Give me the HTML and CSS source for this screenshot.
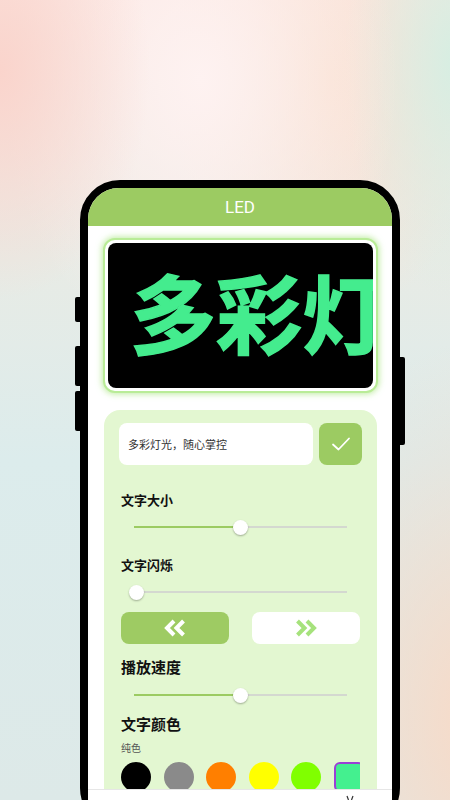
FILE: index.html
```html
<!DOCTYPE html>
<html lang="zh-CN">
<head>
<meta charset="utf-8">
<title>LED</title>
<link rel="stylesheet" href="styles.css">
</head>
<body>
<div class="phone">
  <span class="side side-l1"></span>
  <span class="side side-l2"></span>
  <span class="side side-l3"></span>
  <span class="side side-r1"></span>
  <div class="screen">
    <header class="appbar">LED</header>
    <main class="content">
      <div class="led-frame">
        <div class="led"><span class="led-text">多彩灯光</span></div>
      </div>
      <section class="panel">
        <div class="input-row">
          <div class="input">多彩灯光，随心掌控</div>
          <button class="ok" type="button">
            <svg width="20" height="16" viewBox="0 0 20 16"><path d="M2 8.5 L7.5 13.5 L18 2.5" fill="none" stroke="#fff" stroke-width="1.8" stroke-linecap="round" stroke-linejoin="round"/></svg>
          </button>
        </div>
        <div class="label label-sm l1">文字大小</div>
        <div class="slider s1" style="--v:49.8%"><div class="fill"></div><div class="thumb"></div></div>
        <div class="label label-sm l2">文字闪烁</div>
        <div class="slider s2" style="--v:1.4%"><div class="fill"></div><div class="thumb"></div></div>
        <div class="dir-row">
          <button class="dir dir-on" type="button">
            <svg width="26" height="18" viewBox="0 0 26 18"><path d="M12 2 L5 9 L12 16 M21.5 2 L14.5 9 L21.5 16" fill="none" stroke="#fff" stroke-width="4" stroke-linejoin="miter"/></svg>
          </button>
          <button class="dir dir-off" type="button">
            <svg width="26" height="18" viewBox="0 0 26 18"><path d="M4.5 2 L11.5 9 L4.5 16 M14 2 L21 9 L14 16" fill="none" stroke="#a6e27c" stroke-width="4" stroke-linejoin="miter"/></svg>
          </button>
        </div>
        <div class="label label-lg l3">播放速度</div>
        <div class="slider s3" style="--v:49.8%"><div class="fill"></div><div class="thumb"></div></div>
        <div class="label label-lg l4">文字颜色</div>
        <div class="sub">纯色</div>
        <div class="swatches">
          <span class="sw" style="background:#000000"></span>
          <span class="sw" style="background:#8a8a8a"></span>
          <span class="sw" style="background:#ff7f00"></span>
          <span class="sw" style="background:#ffff00"></span>
          <span class="sw" style="background:#80ff00"></span>
          <span class="sw sw-sel" style="background:#44f08f"></span>
        </div>
      </section>
    </main>
    <footer class="bottombar">
      <svg class="bb-icon" width="10" height="6" viewBox="0 0 10 6"><path d="M2 1 L3.5 5 M8 1 L6.5 5" stroke="#333" stroke-width="1.2" fill="none"/></svg>
    </footer>
  </div>
</div>
</body>
</html>
```

FILE: styles.css
```css
html, body {
  margin: 0;
  padding: 0;
}
body {
  width: 450px;
  height: 800px;
  overflow: hidden;
  font-family: "Noto Sans CJK SC", "Noto Sans", sans-serif;
  background:
    radial-gradient(ellipse 150px 230px at 0px 70px, rgba(250,212,204,1), rgba(250,212,204,0)),
    radial-gradient(ellipse 200px 280px at 200px 80px, rgba(254,242,241,1), rgba(254,242,241,0)),
    radial-gradient(ellipse 110px 240px at 455px 60px, rgba(214,238,226,1), rgba(214,238,226,0)),
    radial-gradient(ellipse 160px 240px at 330px 80px, rgba(249,224,209,1), rgba(249,224,209,0)),
    radial-gradient(ellipse 220px 380px at 480px 720px, rgba(248,218,199,1), rgba(248,218,199,0)),
    linear-gradient(to bottom, #fbe7e2 0px, #e8ebe5 260px, #dcecec 460px, #dde9e8 800px);
}

.phone {
  position: relative;
  box-sizing: border-box;
  width: 320px;
  margin: 180px 0 0 80px;
  border: 8px solid #000;
  border-radius: 40px;
  background: #000;
}
.side {
  position: absolute;
  background: #000;
  width: 7px;
  border-radius: 2px;
}
.side-l1 { left: -13px; top: 109px; height: 25px; }
.side-l2 { left: -13px; top: 158px; height: 40px; }
.side-l3 { left: -13px; top: 203px; height: 40px; }
.side-r1 { right: -13px; top: 169px; height: 88px; }

.screen {
  height: 632px;
  border-radius: 31px 31px 0 0;
  overflow: hidden;
  background: #fff;
  display: flex;
  flex-direction: column;
}
.appbar {
  height: 38px;
  flex: none;
  background: #9ccb62;
  color: #fff;
  font-family: Roboto, "Noto Sans", sans-serif;
  font-size: 17px;
  line-height: 38px;
  text-align: center;
}
.content {
  flex: 1;
  min-height: 0;
  overflow: hidden;
  padding: 12px 14px 0 15px;
}
.led-frame {
  height: 155px;
  box-sizing: border-box;
  border: 2px solid #b9ec97;
  border-radius: 12px;
  padding: 3px;
  background: #fff;
  box-shadow: 0 0 6px 1px rgba(168, 230, 128, 0.75);
}
.led {
  height: 100%;
  background: #000;
  border-radius: 8px;
  overflow: hidden;
  display: flex;
  align-items: center;
  padding: 0 0 9px 22px;
  box-sizing: border-box;
}
.led-text {
  white-space: nowrap;
  color: #44ec8e;
  font-size: 86px;
  font-weight: 700;
  line-height: 1;
  letter-spacing: 0;
  -webkit-text-stroke: 1.5px #44ec8e;
}

.panel {
  margin: 17px 1px 0 1px;
  height: 600px;
  background: #e3f7d1;
  border-radius: 16px;
  padding: 13px 15px 0 15px;
}
.input-row {
  display: flex;
  gap: 6px;
  height: 42px;
}
.input {
  flex: 1;
  background: #fff;
  border-radius: 8px;
  font-size: 11px;
  color: #333;
  line-height: 42px;
  padding-left: 9px;
}
.ok {
  width: 43px;
  border: 0;
  border-radius: 8px;
  background: #9ccb62;
  padding: 0;
  display: flex;
  align-items: center;
  justify-content: center;
}
.label {
  color: #111;
  font-weight: 700;
  padding-left: 2px;
}
.label-sm { font-size: 13px; line-height: 22px; }
.label-lg { font-size: 15px; line-height: 24px; }
.l1 { margin-top: 24px; }
.l2 { margin-top: 17px; }
.l3 { margin-top: 11px; }
.l4 { margin-top: 7px; }

.slider {
  position: relative;
  height: 20px;
  margin: 6px 15px 0 15px;
}
.slider .fill {
  position: absolute;
  left: 0;
  right: 0;
  top: 9px;
  height: 2px;
  background: linear-gradient(to right, #9ccb62 var(--v), #d4d8d0 var(--v));
}
.slider .thumb {
  position: absolute;
  left: var(--v);
  top: 3px;
  width: 15px;
  height: 15px;
  margin-left: -7.5px;
  border-radius: 50%;
  background: #fff;
  box-shadow: 0 1px 2px rgba(0, 0, 0, 0.3);
}

.dir-row {
  display: flex;
  gap: 23px;
  padding: 0 2px;
  margin-top: 10px;
  height: 32px;
}
.dir {
  flex: 1;
  border: 0;
  border-radius: 8px;
  padding: 0;
  display: flex;
  align-items: center;
  justify-content: center;
}
.dir-on { background: #9ecb63; }
.dir-off { background: #fff; }

.sub {
  margin-top: 5px;
  font-size: 10px;
  line-height: 14px;
  color: #555;
  padding-left: 2px;
}
.swatches {
  display: flex;
  gap: 12.6px;
  margin: 7px 2px 0 2px;
  overflow: hidden;
}
.sw {
  flex: none;
  width: 30px;
  height: 30px;
  border-radius: 50%;
}
.sw-sel {
  box-sizing: border-box;
  border-radius: 6px;
  border: 2px solid #9b3fd6;
}

.bottombar {
  flex: none;
  height: 30px;
  background: #fff;
  border-top: 1px solid #e6e6e6;
  position: relative;
}
.bb-icon {
  position: absolute;
  left: 257px;
  top: 5px;
}
```
